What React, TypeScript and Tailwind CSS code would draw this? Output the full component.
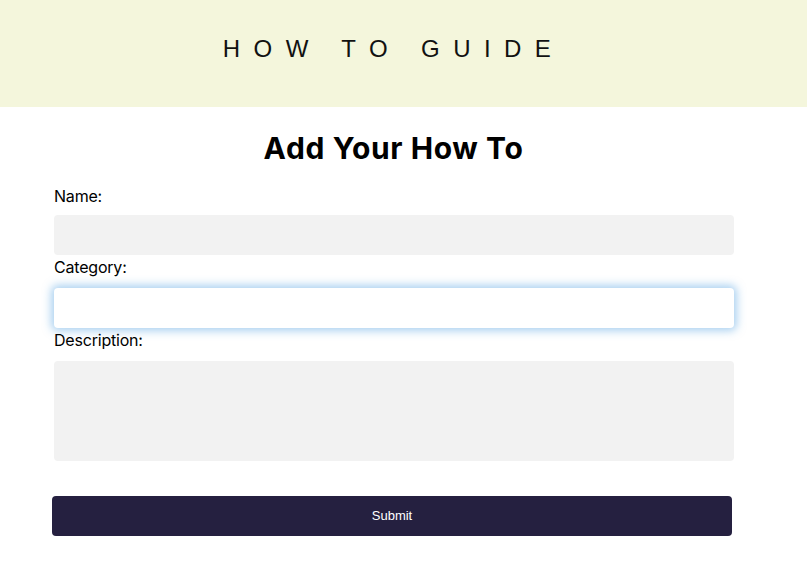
const fields = [
  { id: "name", label: "Name:", gap: "mt-[7px]" },
  { id: "category", label: "Category:", gap: "mt-[9px]", focused: true },
];

export default function App() {
  return (
    <div className="min-h-screen bg-white text-black" style={{ fontFamily: "Inter, 'Noto Sans', sans-serif" }}>
      <header className="flex h-[107px] items-center justify-center bg-[#f4f6dc] pb-[10px] pr-[34px]">
        <h2 className="pl-[14px] text-[24px] font-normal tracking-[13.4px] text-[#111]" style={{ fontFamily: "'Liberation Sans', Arial, sans-serif" }}>
          HOW TO GUIDE
        </h2>
      </header>

      <main className="ml-[53px] w-[681px]">
        <h1 className="mt-[23px] text-center text-3xl font-bold leading-9 tracking-[0.6px]">Add Your How To</h1>

        <form className="mt-[18px] flex flex-col" onSubmit={(e) => e.preventDefault()}>
          {fields.map((f) => (
            <div key={f.id} className="flex flex-col">
              <label htmlFor={f.id} className="pl-px text-base leading-6 tracking-[-0.2px]">
                {f.label}
              </label>
              <input
                id={f.id}
                className={
                  f.focused
                    ? `${f.gap} ml-px h-10 rounded bg-white outline-none shadow-[0_0_8px_3px_rgba(90,165,228,0.5)]`
                    : `${f.gap} ml-px h-10 rounded bg-[#f2f2f2] outline-none`
                }
              />
            </div>
          ))}
          <label htmlFor="description" className="pl-px text-base leading-6 tracking-[-0.2px]">
            Description:
          </label>
          <textarea id="description" className="mt-[9px] ml-px h-[100px] resize-none rounded bg-[#f2f2f2] outline-none" />

          <button
            type="submit"
            className="mt-[35px] -ml-px h-10 w-[680px] rounded bg-[#252040] text-[13px] text-white"
            style={{ fontFamily: "'Liberation Sans', Arial, sans-serif" }}
          >
            Submit
          </button>
        </form>
      </main>
    </div>
  );
}
